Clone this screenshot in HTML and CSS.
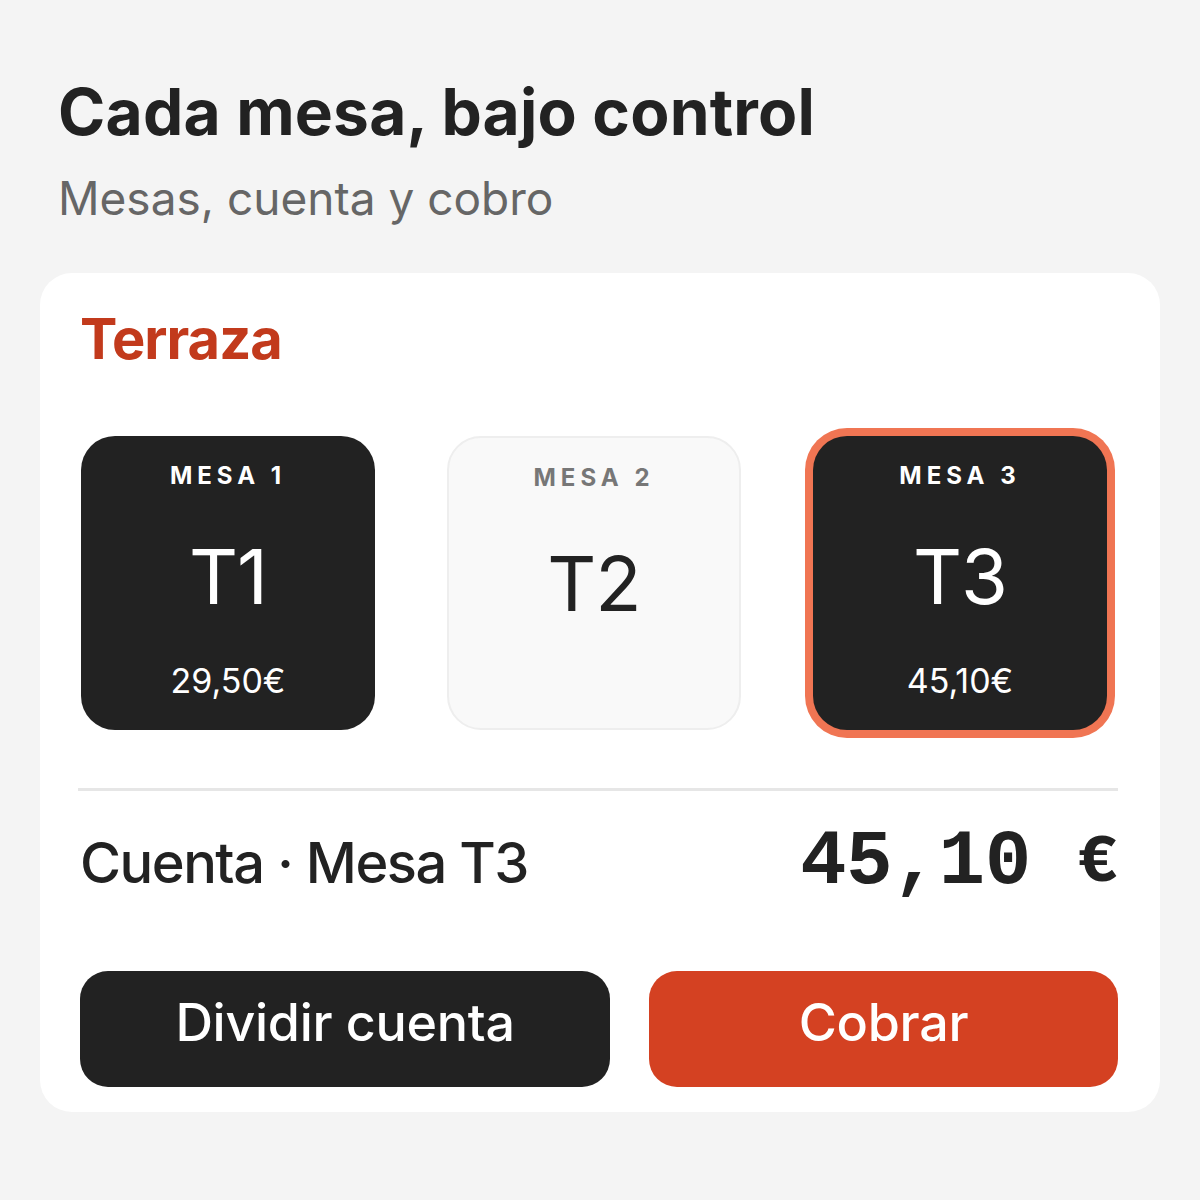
FILE: index.html
```html
<!DOCTYPE html>
<html lang="es">
<head>
<meta charset="utf-8">
<link rel="stylesheet" href="styles.css">
</head>
<body>
<div class="page">
  <header class="header">
    <h1 class="title">Cada mesa, bajo control</h1>
    <p class="subtitle">Mesas, cuenta y cobro</p>
  </header>
  <section class="card">
    <h2 class="zone">Terraza</h2>
    <div class="tiles">
      <div class="tile tile-dark">
        <div class="tile-label">MESA 1</div>
        <div class="tile-code">T1</div>
        <div class="tile-price">29,50€</div>
      </div>
      <div class="tile tile-light">
        <div class="tile-label">MESA 2</div>
        <div class="tile-code">T2</div>
      </div>
      <div class="tile tile-dark tile-active">
        <div class="tile-label">MESA 3</div>
        <div class="tile-code">T3</div>
        <div class="tile-price">45,10€</div>
      </div>
    </div>
    <div class="divider"></div>
    <div class="bill">
      <div class="bill-label">Cuenta · Mesa T3</div>
      <div class="bill-amount"><span class="amount-num">45,10</span><span class="amount-cur">€</span></div>
    </div>
    <div class="actions">
      <button class="btn btn-dark">Dividir cuenta</button>
      <button class="btn btn-red">Cobrar</button>
    </div>
  </section>
</div>
</body>
</html>
```
FILE: styles.css
```css
* { box-sizing: border-box; }
body {
  margin: 0;
  background: #f4f4f4;
  font-family: Inter, "Noto Sans", sans-serif;
  color: #222;
}
.page {
  padding: 0 40px;
}
.header {
  padding: 74px 18px 0;
}
.title {
  margin: 0;
  font-size: 64px;
  font-weight: 700;
  letter-spacing: 0.2px;
  line-height: 1.2;
  color: #222;
}
.subtitle {
  margin: 20px 0 0;
  font-size: 46px;
  font-weight: 400;
  letter-spacing: 0;
  line-height: 1.2;
  color: #666;
}
.card {
  margin-top: 47px;
  background: #fff;
  border-radius: 32px;
  padding: 33px 42px 24px 40px;
  height: 839px;
}
.zone {
  margin: 0;
  font-size: 56px;
  font-weight: 700;
  letter-spacing: -1px;
  line-height: 1.2;
  color: #c23a1c;
}
.tiles {
  display: flex;
  gap: 72px;
  margin-top: 63px;
  padding-left: 1px;
}
.tile {
  width: 294px;
  height: 294px;
  border-radius: 34px;
  display: flex;
  flex-direction: column;
  align-items: center;
  padding: 26px 0 28px;
}
.tile-dark {
  background: #222;
  color: #fff;
}
.tile-light {
  background: #f9f9f9;
  border: 2px solid #eeeeee;
  color: #222;
  padding-bottom: 56px;
}
.tile-active {
  box-shadow: 0 0 0 8px #f07553;
}
.tile-label {
  font-size: 24px;
  font-weight: 700;
  letter-spacing: 5px;
  line-height: 1.2;
}
.tile-light .tile-label {
  color: #777;
}
.tile-code {
  flex: 1;
  display: flex;
  align-items: center;
  font-size: 76px;
  font-weight: 400;
  letter-spacing: -1px;
}
.tile-price {
  font-size: 34px;
  font-weight: 400;
  letter-spacing: 0;
  line-height: 1.2;
}
.divider {
  height: 3px;
  background: #e6e6e6;
  margin: 58px 0 0 -2px;
}
.bill {
  display: flex;
  justify-content: space-between;
  align-items: center;
  margin-top: 28px;
}
.bill-label {
  font-size: 56px;
  font-weight: 500;
  letter-spacing: -1.5px;
  color: #222;
}
.bill-amount {
  display: flex;
  align-items: center;
  gap: 46px;
  font-family: "Liberation Mono", monospace;
  font-weight: 700;
  color: #222;
}
.amount-num {
  font-size: 77px;
}
.amount-cur {
  font-size: 68px;
}
.actions {
  display: grid;
  grid-template-columns: 530px 1fr;
  gap: 39px;
  margin-top: 65px;
}
.btn {
  height: 116px;
  border: none;
  border-radius: 28px;
  padding: 0 0 14px;
  font-family: Inter, "Noto Sans", sans-serif;
  font-size: 52px;
  font-weight: 500;
  letter-spacing: -0.3px;
  color: #fff;
}
.btn-dark { background: #222; }
.btn-red { background: #d44122; }
```
